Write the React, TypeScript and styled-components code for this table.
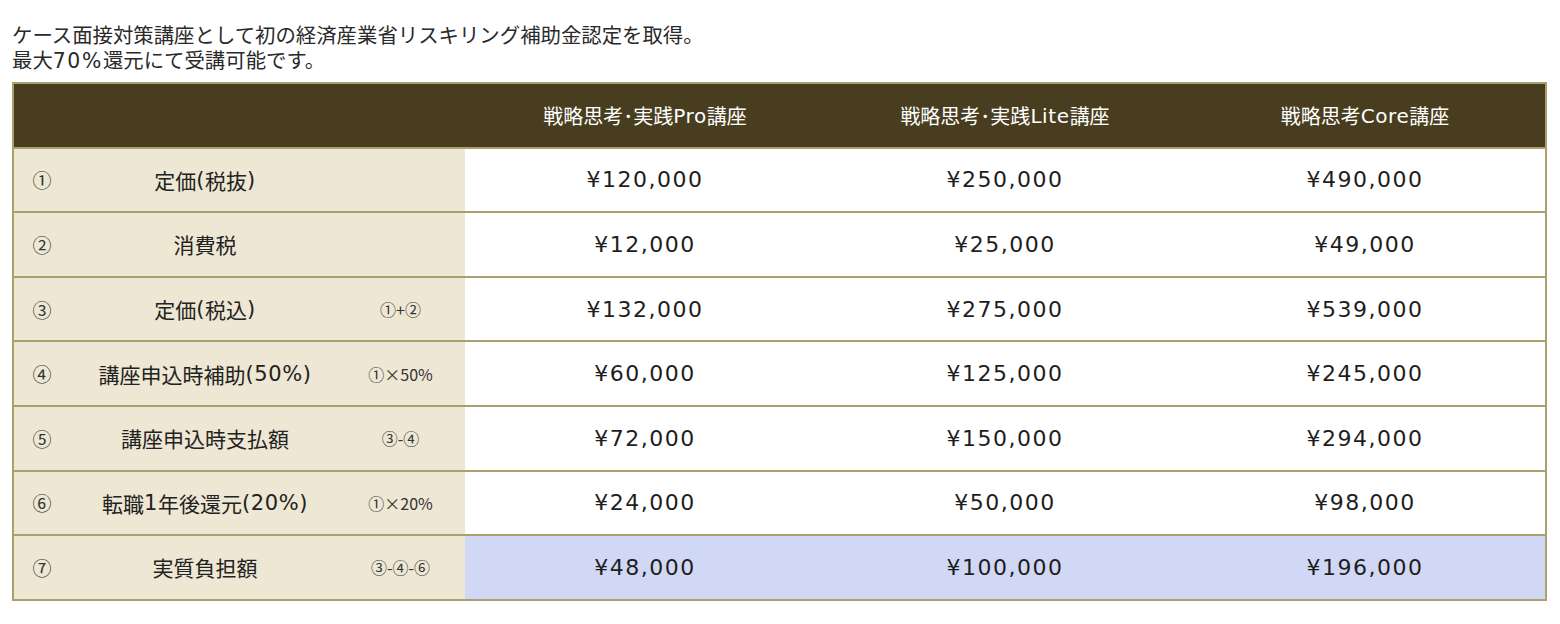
import React from "react";
import styled, { createGlobalStyle } from "styled-components";

const GlobalStyle = createGlobalStyle`
  body {
    margin: 0;
    background: #fff;
    font-family: "DejaVu Sans", "Noto Sans CJK JP", sans-serif;
    color: #222;
  }
`;

const Page = styled.div`
  padding: 22px 13px 0 12px;
`;

const Lead = styled.p`
  margin: 0 0 8px;
  font-family: "Noto Sans CJK JP", sans-serif;
  font-size: 20.4px;
  line-height: 25px;
  color: #2a2a2a;
`;

// latin bits read wider in the original (Meiryo style)
const Latin = styled.span<{ $wide?: boolean }>`
  font-family: "DejaVu Sans", "Noto Sans CJK JP", sans-serif;
  letter-spacing: ${p => (p.$wide ? "1.6px" : "0.6px")};
`;

const Table = styled.div`
  width: 1535px;
  box-sizing: border-box;
  border: 2px solid #aaa06d;
`;

const Row = styled.div<{ $head?: boolean }>`
  display: grid;
  grid-template-columns: 56px 270px 125px repeat(3, 1fr);
  height: 62.6px;
  background: ${p => (p.$head ? "#483e1f" : "#fff")};
  & + & {
    border-top: 2px solid #aaa06d;
  }
`;

const Cell = styled.div`
  display: flex;
  align-items: center;
  justify-content: center;
  white-space: nowrap;
`;

const HeadBlank = styled.div`
  grid-column: span 3;
`;

const HeadCell = styled(Cell)`
  color: #fff;
  font-size: 20px;
  font-family: "Noto Sans CJK JP", sans-serif;
  padding-top: 1px;
`;

const Num = styled(Cell)`
  background: #ede7d3;
  font-size: 19px;
  font-family: "Noto Sans CJK JP", sans-serif;
  color: #333;
`;

const Label = styled(Cell)`
  background: #ede7d3;
  font-size: 21px;
  font-family: "Noto Sans CJK JP", sans-serif;
  color: #222;
`;

const Formula = styled(Cell)`
  background: #ede7d3;
  font-size: 16px;
  font-family: "Noto Sans CJK JP", sans-serif;
  color: #333;
  padding-right: 4px;
`;

const Value = styled(Cell)<{ $hl?: boolean }>`
  background: ${p => (p.$hl ? "#d1d8f6" : "#fff")};
  font-size: 22px;
  letter-spacing: 1.5px;
  color: #1e1e1e;
`;

type Line = {
  no: string;
  label: React.ReactNode;
  formula?: string;
  values: [string, string, string];
  hl?: boolean;
};

const lines: Line[] = [
  { no: "①", label: <>定価<Latin>(</Latin>税抜<Latin>)</Latin></>, values: ["¥120,000", "¥250,000", "¥490,000"] },
  { no: "②", label: "消費税", values: ["¥12,000", "¥25,000", "¥49,000"] },
  {
    no: "③",
    label: <>定価<Latin>(</Latin>税込<Latin>)</Latin></>,
    formula: "①+②",
    values: ["¥132,000", "¥275,000", "¥539,000"]
  },
  {
    no: "④",
    label: <>講座申込時補助<Latin>(50%)</Latin></>,
    formula: "①×50%",
    values: ["¥60,000", "¥125,000", "¥245,000"]
  },
  { no: "⑤", label: "講座申込時支払額", formula: "③-④", values: ["¥72,000", "¥150,000", "¥294,000"] },
  {
    no: "⑥",
    label: <>転職<Latin>1</Latin>年後還元<Latin>(20%)</Latin></>,
    formula: "①×20%",
    values: ["¥24,000", "¥50,000", "¥98,000"]
  },
  { no: "⑦", label: "実質負担額", formula: "③-④-⑥", values: ["¥48,000", "¥100,000", "¥196,000"], hl: true }
];

const courses: React.ReactNode[] = [
  <>戦略思考･実践<Latin>Pro</Latin>講座</>,
  <>戦略思考･実践<Latin>Lite</Latin>講座</>,
  <>戦略思考<Latin>Core</Latin>講座</>
];

export default function App() {
  return (
    <Page>
      <GlobalStyle />
      <Lead>
        ケース面接対策講座として初の経済産業省リスキリング補助金認定を取得。
        <br />
        最大<Latin $wide>70%</Latin>還元にて受講可能です。
      </Lead>
      <Table>
        <Row $head>
          <HeadBlank />
          {courses.map((c, i) => (
            <HeadCell key={i}>{c}</HeadCell>
          ))}
        </Row>
        {lines.map(line => (
          <Row key={line.no}>
            <Num>{line.no}</Num>
            <Label>{line.label}</Label>
            <Formula>{line.formula}</Formula>
            {line.values.map((v, i) => (
              <Value key={i} $hl={line.hl}>
                {v}
              </Value>
            ))}
          </Row>
        ))}
      </Table>
    </Page>
  );
}
